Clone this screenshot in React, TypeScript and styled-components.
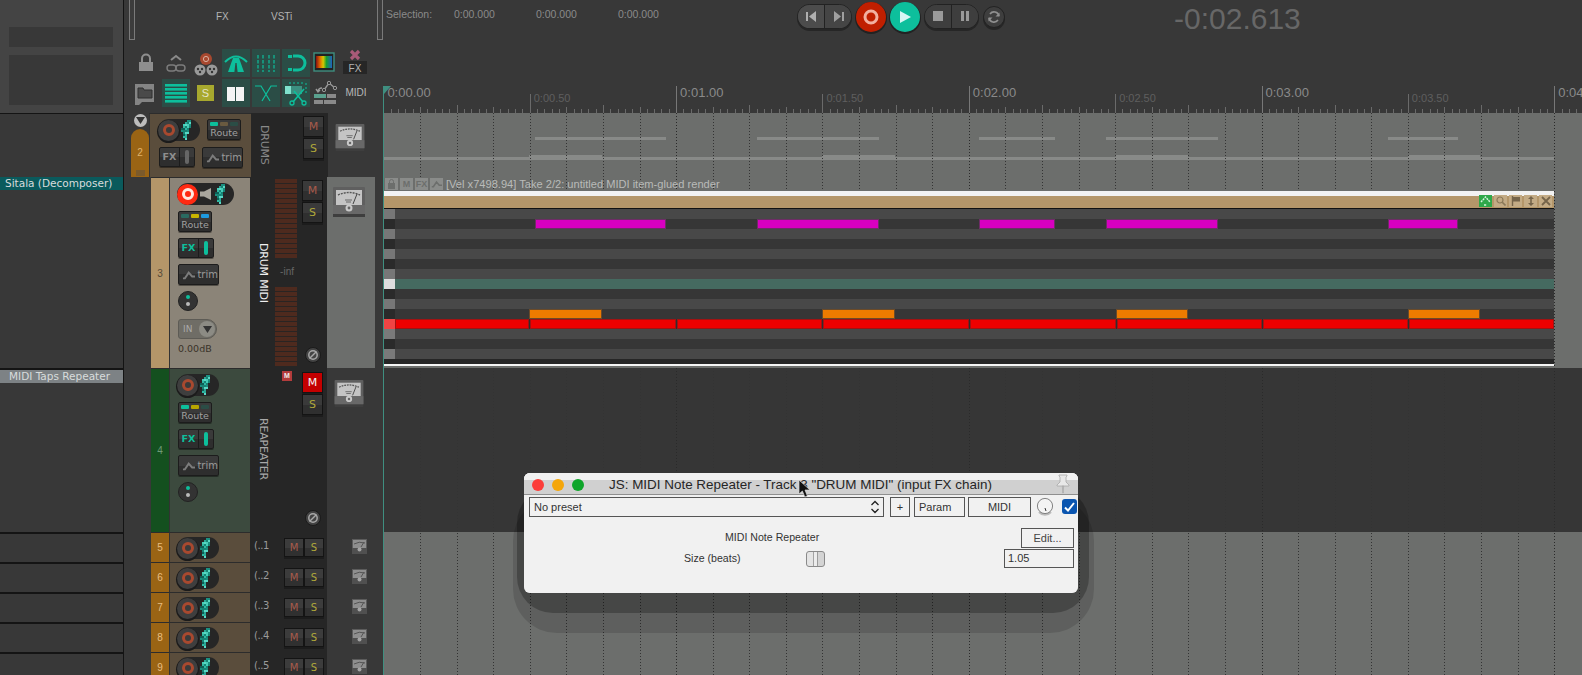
import React from "react";
import styled, { createGlobalStyle } from "styled-components";

const Global = createGlobalStyle`
  html, body { margin: 0; padding: 0; background: #383838; overflow: hidden; }
  * { box-sizing: border-box; }
`;

const UI = `"DejaVu Sans", "Liberation Sans", sans-serif`;
const SANS = `"Liberation Sans", Arial, sans-serif`;
const TEAL = "#0dbf9c";

const Page = styled.div`
  width: 1582px; height: 675px; display: flex; overflow: hidden; position: relative;
  background: #383838; font-family: ${SANS};
`;

/* ---------- names column ---------- */
const Names = styled.div`
  width: 124px; height: 675px; flex: none; display: flex; flex-direction: column; overflow: hidden;
  border-right: 1px solid #141414; background: #383838;
`;
const NamesTop = styled.div`
  height: 113px; flex: none; background: #444; padding: 27px 10px 0 9px; display: flex; flex-direction: column; gap: 8px;
`;
const NamesBox = styled.div<{ $h: number }>`height: ${p => p.$h}px; background: #383838;`;
const NameSpacer = styled.div<{ $h: number }>`
  height: ${p => p.$h}px; flex: none; border-top: 1px solid #141414;
`;
const NameLabel = styled.div<{ $bg: string; $pad: number }>`
  height: 13px; flex: none; background: ${p => p.$bg}; color: #d8dcdc; font: 10.5px/13px ${UI};
  padding-left: ${p => p.$pad}px; white-space: nowrap;
`;
const NameGap = styled.div<{ $h: number }>`height: ${p => p.$h}px; flex: none;`;
const NameSlim = styled.div<{ $h: number }>`
  height: ${p => p.$h}px; flex: none; border-top: 2px solid #141414;
`;

/* ---------- TCP column ---------- */
const Tcp = styled.div`width: 259px; height: 675px; flex: none; display: flex; flex-direction: column;`;
const TcpHead = styled.div`height: 113px; flex: none; display: flex; flex-direction: column;`;
const TopStrip = styled.div`height: 40px; display: flex; align-items: flex-start; padding-left: 5px; color: #b4b4b4; font: 10px ${SANS};`;
const VBar = styled.div`width: 6px; height: 40px; background: #3c3c3c; border: 1px solid #7a7a7a; border-top: 0; flex: none;`;
const StripText = styled.span<{ $w: number; $ml: number }>`
  display: block; width: ${p => p.$w}px; margin-left: ${p => p.$ml}px; margin-top: 11px; line-height: 12px;
`;
const RightBar = styled(VBar)`margin-left: 76px;`;
const ToolGrid = styled.div`
  margin-top: 9px; margin-left: 8px; display: grid; grid-template-columns: repeat(8, 30px); grid-auto-rows: 30px;
`;
const ToolCell = styled.div<{ $on?: boolean }>`
  width: 28px; height: 28px; background: ${p => (p.$on ? "#2b4d46" : "transparent")};
  color: #b8b8b8; font: 10px/28px ${SANS}; text-align: center;
`;

const TrackRow = styled.div<{ $h: number }>`height: ${p => p.$h}px; flex: none; display: flex;`;
const Gutter = styled.div<{ $w: number }>`width: ${p => p.$w}px; flex: none; position: relative;`;
const FolderKnob = styled.div`
  position: absolute; left: 10px; top: 1px; width: 13px; height: 13px; border-radius: 50%;
  background: #bdbdbd; display: flex; align-items: center; justify-content: center;
`;
const FolderTab = styled.div`
  width: 18px; flex: none; margin-top: 16px; border-radius: 9px 9px 0 0; background: #9a6414; color: #e0b269;
  font: 10px ${SANS}; display: flex; flex-direction: column; align-items: center; padding-top: 18px; position: relative;
`;
const FolderGlyph = styled.div`
  position: absolute; bottom: 1px; left: 5px; width: 9px; height: 6px; background: #7b5a2b;
`;
const Strip = styled.div<{ $bg: string; $fg: string }>`
  width: 18px; flex: none; background: ${p => p.$bg}; color: ${p => p.$fg}; font: 10px ${SANS};
  display: flex; align-items: center; justify-content: center; border-top: 1px solid #2c2c2c;
`;
const Panel = styled.div<{ $bg: string }>`
  width: 81px; flex: none; background: ${p => p.$bg}; border-left: 1px solid #333; border-top: 1px solid #2c2c2c;
  padding: 5px 0 0 7px; display: flex; flex-direction: column; gap: 6px; align-items: flex-start;
`;
const WidePanel = styled(Panel)`
  width: 102px; padding: 5px 0 0 8px; flex-direction: row; flex-wrap: wrap; gap: 6px; align-content: flex-start;
`;
const NameBox = styled.div`
  width: 77px; flex: none; background: #262626; display: flex; position: relative;
`;
const NameSlot = styled.div<{ $top: number; $fg: string }>`
  width: 25px; flex: none; padding-top: ${p => p.$top}px; display: flex; justify-content: center;
  color: ${p => p.$fg}; font: 11px/12px ${UI}; letter-spacing: -.2px;
`;
const Vertical = styled.span`writing-mode: vertical-rl; white-space: nowrap; line-height: 12px;`;
const MeterCol = styled.div`width: 22px; flex: none; display: flex; flex-direction: column;`;
const MeterBar = styled.div`
  height: 79px; margin-top: 2px; background: repeating-linear-gradient(to bottom, #4e2a1e 0 4px, #2a2422 4px 5px);
`;
const MeterLabel = styled.div`height: 27px; color: #666; font: 10px/27px ${SANS}; text-align: right; padding-right: 3px;`;
const StripCol = styled.div<{ $pt: number; $pb: number }>`
  width: 21px; margin-left: 5px; flex: none; display: flex; flex-direction: column; gap: 1px; align-items: center;
  padding: ${p => p.$pt}px 0 ${p => p.$pb}px;
`;
const MSButton = styled.div<{ $h: number; $fg: string; $bg?: string }>`
  width: 21px; height: ${p => p.$h}px; background: ${p => p.$bg || "linear-gradient(#3a3a3a 55%, #2f2f2f 55%)"};
  border: 1px solid #141414; color: ${p => p.$fg}; font: 11px/${p => p.$h - 2}px ${UI}; text-align: center;
  box-shadow: 0 2px 0 #1c1c1c;
`;
const PhaseBtn = styled.div`
  margin-top: auto; width: 16px; height: 16px; border-radius: 50%; background: #444; border: 1px solid #1a1a1a;
  display: flex; align-items: center; justify-content: center;
`;
const MutedBadge = styled.div`
  position: absolute; left: 32px; top: 3px; width: 10px; height: 10px; background: #b33c3c; color: #eee;
  font: bold 7px/10px ${SANS}; text-align: center;
`;
const MeterBox = styled.div<{ $bg: string; $pt: number; $pl: number }>`
  width: 48px; flex: none; background: ${p => p.$bg}; padding: ${p => p.$pt}px 0 0 ${p => p.$pl}px;
`;
const CompactName = styled.div`
  width: 34px; flex: none; color: #9a9a9a; font: 10px ${UI}; padding: 8px 0 0 4px; letter-spacing: -.4px; white-space: nowrap;
`;
const CompactMS = styled.div`
  display: flex; margin-top: 6px; height: 19px; box-shadow: 0 2px 0 #1c1c1c; flex: none;
`;
const CompactBtn = styled.div<{ $fg: string }>`
  width: 20px; height: 19px; border: 1px solid #141414; background: linear-gradient(#3c3c3c 55%, #303030 55%);
  color: ${p => p.$fg}; font: 10px/17px ${UI}; text-align: center;
`;

const RecPill = styled.div<{ $w: number }>`
  width: ${p => p.$w}px; height: 22px; border-radius: 11px; background: #262626; display: flex; align-items: center; flex: none; gap: 2px;
`;
const RecDisc = styled.div<{ $armed?: boolean }>`
  width: 21px; height: 21px; border-radius: 50%; flex: none; display: flex; align-items: center; justify-content: center;
  background: ${p => (p.$armed ? "#ff2a12" : "#3e3e3e")}; box-shadow: ${p => (p.$armed ? "none" : "0 1px 0 1px #1b1b1b")};
`;
const RecRing = styled.div<{ $armed?: boolean }>`
  width: 12px; height: 12px; border-radius: 50%; background: ${p => (p.$armed ? "#ff2a12" : "#3a3a3a")};
  border: 3px solid ${p => (p.$armed ? "#ffe9e0" : "#a8492f")};
`;
const BtnBase = styled.div`
  background: linear-gradient(#3a3a3a 50%, #2e2e2e 50%); border: 1px solid #1c1c1c; border-radius: 2px;
  box-shadow: 0 1px 0 rgba(0,0,0,.4); margin-left: 1px; color: #a0a0a0; font: 10px ${UI}; flex: none;
`;
const RouteBtn = styled(BtnBase)`width: 34px; height: 21px; display: flex; flex-direction: column; align-items: center; line-height: 11px; font-size: 9.5px;`;
const LedRow = styled.div`display: flex; gap: 2px; padding: 2px 0 1px;`;
const Led = styled.div<{ $c: string }>`width: 8px; height: 4px; border-radius: 1px; background: ${p => p.$c};`;
const FxBtn = styled(BtnBase)<{ $on?: boolean }>`
  width: 36px; height: 20px; display: flex; align-items: center; color: ${p => (p.$on ? TEAL : "#8e8e8e")}; font: bold 9.5px ${UI};
`;
const FxLabel = styled.span`width: 20px; height: 18px; line-height: 18px; text-align: center; border-right: 1px solid #1c1c1c;`;
const FxBar = styled.div<{ $on?: boolean }>`
  width: 4px; height: 14px; margin-left: 5px; border-radius: 2px; background: ${p => (p.$on ? TEAL : "#666")};
`;
const TrimBtn = styled(BtnBase)`width: 41px; height: 21px; display: flex; align-items: center; gap: 2px; padding-left: 3px; font: 10px ${UI}; color: #9a9a9a;`;
const Knob = styled.div`
  width: 20px; height: 20px; margin-left: 1px; border-radius: 50%; background: #333; border: 1px solid #222; position: relative; flex: none;
  display: flex; flex-direction: column; gap: 3px; align-items: center; padding-top: 3px;
`;
const KnobDot = styled.div<{ $c: string }>`width: 4px; height: 4px; border-radius: 50%; background: ${p => p.$c};`;
const InPill = styled.div`
  width: 39px; height: 20px; margin: 2px 0 0 1px; border-radius: 3px 10px 10px 3px; background: #6f6d66; border: 1px solid #5d5b55;
  color: #aaa; font: 9px/18px ${UI}; padding-left: 4px; position: relative;
`;
const InCircle = styled.div`
  position: absolute; right: 1px; top: 1px; width: 16px; height: 16px; border-radius: 50%; background: #8c8b84;
  display: flex; align-items: center; justify-content: center;
`;
const DbText = styled.div`margin: -2px 0 0 1px; color: #3a3329; font: 9.5px ${UI};`;
const CompactPanel = styled(Panel)`padding: 4px 0 0 7px;`;

/* ---------- arrange ---------- */
const Arrange = styled.div`flex: 1; min-width: 0; height: 675px; display: flex; flex-direction: column;`;
const Header = styled.div`height: 86px; flex: none; display: flex; align-items: flex-start; color: #888; font: 11px ${SANS};`;
const SelText = styled.span<{ $w: number; $ml: number }>`
  display: block; width: ${p => p.$w}px; margin-left: ${p => p.$ml}px; margin-top: 8px; line-height: 13px; white-space: nowrap; color: #8a8a8a; font-size: 10.5px;
`;
const Transport = styled.div`
  display: flex; align-items: center; margin-left: 139px; margin-top: 2px; gap: 1px; flex: none;
`;
const TGroup = styled.div<{ $ml?: number }>`
  width: 55px; height: 25px; border-radius: 12.5px; background: #3e3e3e; border: 1px solid #222; display: flex;
  box-shadow: 0 2px 0 #262626; overflow: hidden; margin: -1px 0 0 ${p => p.$ml || 0}px;
`;
const TCell = styled.div<{ $bg: string }>`
  flex: 1; display: flex; align-items: center; justify-content: center; background: ${p => p.$bg};
  & + & { border-left: 1px solid #222; }
`;
const TBig = styled.div<{ $bg: string; $ml: number }>`
  width: 30px; height: 30px; border-radius: 50%; background: ${p => p.$bg}; display: flex; align-items: center; justify-content: center;
  box-shadow: 0 1px 0 1px #222; margin-left: ${p => p.$ml}px; flex: none;
`;
const TLoop = styled.div`
  width: 22px; height: 22px; border-radius: 50%; background: #3e3e3e; border: 1px solid #222; display: flex; align-items: center; justify-content: center;
  margin-left: 3px; box-shadow: 0 2px 0 #262626; flex: none;
`;
const BigTime = styled.div`
  margin-left: 169px; margin-top: 1px; color: #676767; font: 30px/36px ${SANS}; white-space: nowrap;
`;
const RulerBox = styled.div`height: 27px; flex: none; position: relative;`;
const RulerSvg = styled.svg`display: block;`;
const LaneArea = styled.div`
  flex: 1; min-height: 0; position: relative; display: flex; flex-direction: column; border-left: 1px solid #3f8f80;
`;
const Lane = styled.div<{ $h: number; $bg: string }>`
  height: ${p => p.$h}px; flex: none; background: ${p => p.$bg}; position: relative;
`;
const Fill = styled.div<{ $bg: string }>`flex: 1; background: ${p => p.$bg};`;
const GridOverlay = styled.svg`position: absolute; left: 0; top: 0; z-index: 1; pointer-events: none;`;
const Thumb = styled.svg`display: block; position: absolute; left: 0; top: 0;`;

const Item = styled.div`position: relative; z-index: 2; width: 1170px; height: 176px; display: flex; flex-direction: column;`;
const ItemLabel = styled.div`
  position: relative; z-index: 2; height: 14px; display: flex; align-items: center; gap: 2px; padding-left: 1px; color: #b9bbb9; font: 11.1px/14px ${SANS};
`;
const MiniIcon = styled.div<{ $bg: string; $fg?: string }>`
  width: 13px; height: 12px; background: ${p => p.$bg}; color: ${p => p.$fg || "#6c6e6c"}; font: bold 9px/12px ${SANS}; text-align: center; flex: none;
  display: flex; align-items: center; justify-content: center;
`;
const LabelText = styled.span`margin-left: 1px; white-space: nowrap;`;
const WhiteBand = styled.div`height: 5px; background: #f2f2f2; flex: none;`;
const TanBand = styled.div`
  height: 13px; background: #b49669; border-bottom: 1px solid #111; flex: none; display: flex; justify-content: flex-end;
  gap: 2px; padding-right: 2px; align-items: flex-start; overflow: visible;
`;
const TanBtn = styled.div<{ $bg: string }>`
  width: 13px; height: 12px; margin-top: -1px; background: ${p => p.$bg}; display: flex; align-items: center; justify-content: center; flex: none;
`;
const PitchRow = styled.div<{ $bg: string }>`
  height: 10px; flex: none; background: ${p => p.$bg}; position: relative; display: flex;
`;
const PianoKey = styled.div<{ $bg: string }>`width: 11px; height: 100%; background: ${p => p.$bg}; flex: none;`;
const Note = styled.div<{ $bg: string; $bd: string }>`
  position: absolute; top: 0; height: 10px; background: ${p => p.$bg}; border: 1px solid ${p => p.$bd};
`;
const ItemFoot = styled.div`height: 5px; flex: none; background: #262626;`;
const ItemLine = styled.div`height: 2px; flex: none; background: #f4f4f4;`;

/* ---------- FX window ---------- */
const FxWindow = styled.div`
  position: absolute; left: 524px; top: 473px; width: 554px; height: 120px; z-index: 5; border-radius: 6px;
  background: #f1f1f1; color: #222; font: 11px ${SANS}; display: flex; flex-direction: column;
  &::before {
    content: ""; position: absolute; z-index: -2; left: -11px; right: -16px; top: 24px; bottom: -40px; border-radius: 44px;
    background: rgba(0,0,0,.13);
  }
  &::after {
    content: ""; position: absolute; z-index: -1; left: -7px; right: -11px; top: 14px; bottom: -20px; border-radius: 36px;
    background: rgba(0,0,0,.25);
  }
`;
const WinSurface = styled.div`
  flex: 1; border-radius: 6px; background: #f1f1f1; display: flex; flex-direction: column; overflow: hidden;
`;
const TitleBar = styled.div`
  height: 22px; flex: none; background: linear-gradient(#f1f1f1 0 7px, #d0d0d0 7px 21px, #8f8f8f 21px);
  display: flex; align-items: center; position: relative; padding-left: 8px; gap: 8px; padding-top: 1px;
`;
const Light = styled.div<{ $c: string }>`width: 12px; height: 12px; border-radius: 50%; background: ${p => p.$c};`;
const TitleText = styled.div`
  position: absolute; left: 85px; top: 4px; font: 13.45px/16px ${SANS}; color: #262626; white-space: nowrap;
`;
const PinIcon = styled.svg`position: absolute; right: 7px; top: 1px;`;
const CursorIcon = styled.svg`position: absolute; left: 274px; top: 7px; z-index: 3;`;
const ControlRow = styled.div`
  display: flex; align-items: center; gap: 5px; padding: 1px 0 0 5px; height: 22px; flex: none;
`;
const FrameBox = styled.div<{ $w: number; $center?: boolean; $ml?: number }>`
  width: ${p => p.$w}px; height: 20px; border: 1px solid #555; flex: none; font: 11px/18px ${SANS};
  text-align: ${p => (p.$center ? "center" : "left")}; padding-left: ${p => (p.$center ? 0 : 4)}px; color: #333;
  display: flex; align-items: center; justify-content: ${p => (p.$center ? "center" : "space-between")};
  margin-left: ${p => p.$ml || 0}px;
`;
const PresetArrows = styled.svg`margin-right: 2px; flex: none;`;
const WinKnob = styled.svg`flex: none;`;
const CheckBox = styled.div`
  width: 15px; height: 15px; border-radius: 3px; background: #0a55b0; flex: none; display: flex; align-items: center; justify-content: center; margin-left: 3px;
`;
const WinBody = styled.div`
  display: grid; grid-template-columns: 160px 122px 198px 70px; grid-template-rows: 20px 22px; row-gap: 2px; padding-top: 11px;
`;
const Heading = styled.div`grid-column: 2 / 4; grid-row: 1; padding: 2px 0 0 41px; font: 10.6px/14px ${SANS}; color: #333; white-space: nowrap;`;
const EditBtn = styled.div`
  grid-column: 4; grid-row: 1; margin-left: 17px; width: 53px; height: 20px; border: 1px solid #555; text-align: center; font: 11px/18px ${SANS}; color: #444;
`;
const ParamName = styled.div`grid-column: 1; grid-row: 2; margin-left: 160px; white-space: nowrap; font: 10.6px/16px ${SANS}; color: #333;`;
const SliderCell = styled.div`grid-column: 3; grid-row: 2; position: relative;`;
const Thumbish = styled.div`
  width: 19px; height: 16px; border-radius: 3px; border: 1px solid #8a8a8a; margin-top: 1px;
  background: linear-gradient(90deg, #e4e4e4 0 35%, #a4a4a4 35% 42%, #ececec 42% 60%, #9c9c9c 60% 66%, #d4d4d4 66% 100%);
`;
const ValueBox = styled.div`
  grid-column: 4; grid-row: 2; margin-top: -1px; width: 70px; height: 19px; border: 1px solid #555; font: 11px/17px ${SANS}; padding-left: 3px; color: #333;
`;

/* ---------- small drawings ---------- */
const FEATHER = ["...##.", "..###.", ".####.", ".####.", "####..", "####..", ".###..", ".##...", ".##...", "..#..."];
const FEATHER_TONES = ["#178274", "#5ad8c6", "#2fb8a4", "#0e5f56", "#45cdb8", "#2aa897", "#1b8f80"];
const Feather = () => (
  <svg width="12" height="20" viewBox="0 0 6 10" shapeRendering="crispEdges">
    {FEATHER.flatMap((row, y) =>
      row.split("").map((c, x) => {
        if (c !== "#") return null;
        const fill = FEATHER_TONES[(x * x * 3 + y * y * 5 + x * y) % FEATHER_TONES.length];
        return <rect key={`${x}-${y}`} x={x} y={y} width="1" height="1" fill={fill} />;
      })
    )}
  </svg>
);

const Speaker = () => (
  <svg width="13" height="14" viewBox="0 0 13 14">
    <path d="M0 4.5h4L11 1v12L4 9.5H0z" fill="#a9a69e" />
  </svg>
);

const Vu: React.FC<{ w: number; h: number }> = ({ w, h }) => (
  <svg width={w} height={h} viewBox="0 0 32 30">
    <rect x="0" y="0" width="32" height="27" rx="1" fill="#5f5f5f" />
    <rect x="0" y="27" width="32" height="3" fill="#3e3e3e" />
    <rect x="3" y="3" width="26" height="15" fill="#c4c4c4" />
    <path d="M5 8 Q16 3 27 8" fill="none" stroke="#555" strokeWidth="1.4" strokeDasharray="2 1" />
    <path d="M12 13h7M13 15h5" stroke="#666" strokeWidth="1" />
    <path d="M20 17L24 7" stroke="#444" strokeWidth="1" />
    <rect x="0" y="18" width="32" height="9" fill="#686868" />
    <circle cx="16" cy="21" r="3.5" fill="#c9c9c9" />
    <circle cx="16" cy="21" r="1.4" fill="#666" />
  </svg>
);

const VuSmall = () => (
  <svg width="15" height="15" viewBox="0 0 15 15">
    <rect width="15" height="15" fill="#5c5c5c" />
    <rect x="1" y="1" width="13" height="8" fill="#8e8e8e" />
    <path d="M2 5Q7 2 13 4M9 8l3-5" fill="none" stroke="#555" strokeWidth="1" />
    <rect x="0" y="9" width="15" height="6" fill="#505050" />
    <circle cx="7.5" cy="10.5" r="2" fill="#a4a4a4" />
  </svg>
);

const Phase = () => (
  <svg width="12" height="12" viewBox="0 0 12 12">
    <circle cx="6" cy="6" r="4.2" fill="none" stroke="#a8a8a8" strokeWidth="1.5" />
    <path d="M2.5 9.5l7-7" stroke="#a8a8a8" strokeWidth="1.5" />
  </svg>
);

const TrimGlyph = () => (
  <svg width="14" height="10" viewBox="0 0 14 10">
    <path d="M1 8.5h2L7 2.5l3.5 4H14" fill="none" stroke="#7c7c7c" strokeWidth="2" />
  </svg>
);

const ToolIcon: React.FC<{ name: string }> = ({ name }) => {
  const P = (c: React.ReactNode) => <svg width="28" height="28" viewBox="0 0 28 28">{c}</svg>;
  switch (name) {
    case "lock":
      return P(<><rect x="7" y="13" width="14" height="9" fill="#8e8e8e" /><path d="M10 13V9.5a4 4 0 018 0V13" fill="none" stroke="#8e8e8e" strokeWidth="2" /></>);
    case "link":
      return P(<><path d="M9 11l5-4 5 4" fill="none" stroke="#8a8a8a" strokeWidth="2" /><rect x="5" y="16" width="9" height="6" rx="3" fill="none" stroke="#7c7c7c" strokeWidth="1.4" /><rect x="14" y="16" width="9" height="6" rx="3" fill="none" stroke="#7c7c7c" strokeWidth="1.4" /></>);
    case "reels":
      return P(<><circle cx="14" cy="10" r="6" fill="#a8482f" /><circle cx="14" cy="10" r="2.6" fill="none" stroke="#d8b0a0" strokeWidth="1" /><circle cx="8" cy="21" r="5.5" fill="#999" /><circle cx="20" cy="21" r="5.5" fill="#999" />{[[6, 20], [10, 20], [8, 23], [18, 20], [22, 20], [20, 23]].map(([x, y]) => <circle key={`${x}${y}`} cx={x} cy={y} r="1.2" fill="#333" />)}</>);
    case "road":
      return P(<><path d="M3 13Q14 2 25 13" fill="none" stroke={TEAL} strokeWidth="2" /><path d="M11 9h6l5 14H6z" fill={TEAL} /><path d="M13.4 14h1.2l1 9h-3.2z" fill="#2b4d46" /></>);
    case "grid":
      return P(<>{[6, 11, 17, 22].map(x => <path key={x} d={`M${x} 6v17`} stroke={TEAL} strokeWidth="1.2" strokeDasharray="3.5 1.5" />)}</>);
    case "magnet":
      return P(<><path d="M11 7h5a7 7 0 010 14h-5" fill="none" stroke={TEAL} strokeWidth="3" /><rect x="6" y="6" width="4" height="3" fill={TEAL} /><rect x="6" y="19" width="4" height="3" fill={TEAL} /></>);
    case "spectrum":
      return (
        <svg width="28" height="28" viewBox="0 0 28 28">
          <defs><linearGradient id="spec"><stop offset="0" stopColor="#8a1010" /><stop offset=".25" stopColor="#e06a00" /><stop offset=".45" stopColor="#d8c800" /><stop offset=".65" stopColor="#18a030" /><stop offset="1" stopColor="#2060c0" /></linearGradient></defs>
          <rect x="2" y="4" width="20" height="18" fill="#222" stroke="#3f8f80" strokeWidth="1.4" />
          <rect x="4" y="7" width="16" height="12" fill="url(#spec)" />
        </svg>
      );
    case "fxoff":
      return P(<><path d="M9 2l8 8M17 2l-8 8" stroke="#a85a78" strokeWidth="3.2" /><rect x="1" y="12" width="24" height="13" fill="#262626" /><text x="13" y="22.5" textAnchor="middle" fontSize="10" fontFamily="Liberation Sans" fill="#b4b4b4">FX</text></>);
    case "folder":
      return P(<><path d="M3 5h19v18h-12l-3 3H3z" fill="#848484" /><path d="M6 9h5l1 2h8v8H6z" fill="#4a4a4a" stroke="#2f2f2f" /></>);
    case "lanes":
      return P(<>{[5, 9, 13, 17, 21].map(y => <rect key={y} x="3" y={y} width="22" height="2.6" fill={TEAL} />)}</>);
    case "solo":
      return P(<><rect x="5" y="6" width="17" height="16" fill="#a8a82e" /><text x="13.5" y="18" textAnchor="middle" fontSize="11" fontFamily="Liberation Sans" fill="#e4e4c8">S</text></>);
    case "columns":
      return P(<><rect x="5" y="8" width="8" height="14" fill="#f4f4f4" /><rect x="14" y="8" width="8" height="14" fill="#f4f4f4" /></>);
    case "cross":
      return P(<><path d="M3 7h6l9 15M25 7h-6l-9 15" fill="none" stroke={TEAL} strokeWidth="1.2" /></>);
    case "scissors":
      return P(<><rect x="3" y="7" width="6" height="8" fill="#7fe0cc" /><rect x="9" y="7" width="11" height="8" fill="#3b8f80" /><path d="M7 4h16M24 4v10" stroke={TEAL} strokeWidth="1" strokeDasharray="2 2" /><path d="M22 10L11 23M12 12l9 11" stroke={TEAL} strokeWidth="1.6" /><circle cx="10" cy="24" r="2" fill="none" stroke={TEAL} strokeWidth="1.3" /><circle cx="22" cy="24" r="2" fill="none" stroke={TEAL} strokeWidth="1.3" /></>);
    case "envelope":
      return P(<><path d="M6 12a4 4 0 014-3M4 10l2 3 2-2" fill="none" stroke="#999" strokeWidth="1.4" /><path d="M12 11l5-7 6 5" fill="none" stroke="#999" strokeWidth="1.3" /><circle cx="12" cy="11" r="1.7" fill="#383838" stroke="#999" /><circle cx="17" cy="4" r="1.7" fill="#383838" stroke="#999" /><circle cx="23" cy="9" r="1.7" fill="#383838" stroke="#999" /><rect x="2" y="15" width="12" height="4" fill="#5aa08e" /><rect x="15" y="15" width="9" height="4" fill="#8a8a8a" /><rect x="2" y="21" width="9" height="4" fill="#8a8a8a" /><rect x="12" y="21" width="12" height="4" fill="#8a8a8a" /></>);
    default:
      return null;
  }
};

const toolbar: { icon?: string; on?: boolean; text?: string }[] = [
  { icon: "lock" }, { icon: "link" }, { icon: "reels" }, { icon: "road", on: true }, { icon: "grid", on: true }, { icon: "magnet", on: true }, { icon: "spectrum" }, { icon: "fxoff" },
  { icon: "folder" }, { icon: "lanes", on: true }, { icon: "solo" }, { icon: "columns", on: true }, { icon: "cross", on: true }, { icon: "scissors", on: true }, { icon: "envelope" }, { text: "MIDI" },
];

const Rec: React.FC<{ w: number; armed?: boolean; speaker?: boolean }> = ({ w, armed, speaker }) => (
  <RecPill $w={w}>
    <RecDisc $armed={armed}><RecRing $armed={armed} /></RecDisc>
    {speaker && <Speaker />}
    <Feather />
  </RecPill>
);
const Route: React.FC<{ leds: string[] }> = ({ leds }) => (
  <RouteBtn><LedRow>{leds.map((c, i) => <Led key={i} $c={c} />)}</LedRow>Route</RouteBtn>
);
const Fx: React.FC<{ on?: boolean }> = ({ on }) => (
  <FxBtn $on={on}><FxLabel>FX</FxLabel><FxBar $on={on} /></FxBtn>
);
const Trim = () => <TrimBtn><TrimGlyph />trim</TrimBtn>;
const Pan = () => <Knob><KnobDot $c={TEAL} /><KnobDot $c="#bbb" /></Knob>;
const Triangle = () => (
  <svg width="9" height="7" viewBox="0 0 9 7"><path d="M0 0h9L4.5 7z" fill="#333" /></svg>
);

const compact = [
  { n: 5, t: "(..1" }, { n: 6, t: "(..2" }, { n: 7, t: "(..3" }, { n: 8, t: "(..4" }, { n: 9, t: "(..5" },
];

/* ---------- arrange data ---------- */
const ORIGIN = 384;
const PX_SEC = 292.7;
const xOf = (s: number) => 383.4 + s * PX_SEC - ORIGIN;
const ticks = Array.from({ length: 170 }, (_, i) => i);
const magenta: [number, number][] = [[535, 666], [757, 879], [979, 1055], [1106, 1218], [1388, 1458]];
const orange: [number, number][] = [[529, 602], [822, 895], [1116, 1188], [1408, 1480]];
const red: [number, number][] = [[395, 529], [530, 676], [677, 822], [823, 969], [970, 1116], [1117, 1262], [1263, 1408], [1409, 1554]];
const L = "#484848", D = "#363636";
const pitches: { bg: string; key: string; notes?: [number, number][]; c?: string; b?: string }[] = [
  { bg: L, key: "#777" },
  { bg: D, key: "#2a2a2a", notes: magenta, c: "#d800c0", b: "#6e2c66" },
  { bg: L, key: "#777" }, { bg: D, key: "#2a2a2a" }, { bg: L, key: "#777" }, { bg: D, key: "#2a2a2a" }, { bg: L, key: "#777" },
  { bg: "#456a60", key: "#dedede" },
  { bg: D, key: "#2a2a2a" }, { bg: L, key: "#777" },
  { bg: D, key: "#2a2a2a", notes: orange, c: "#ee7b00", b: "#6b4a28" },
  { bg: "#2e2e2e", key: "#f04444", notes: red, c: "#ee0000", b: "#a01212" },
  { bg: L, key: "#7a7a7a" }, { bg: D, key: "#2a2a2a" }, { bg: L, key: "#7a7a7a" },
];

const Ruler = () => (
  <RulerSvg width="1199" height="27" viewBox="0 0 1199 27">
    {ticks.map(i => {
      const x = 0.4 + i * (PX_SEC / 40);
      const major = i % 40 === 0, half = i % 20 === 0, beat = i % 5 === 0;
      const top = major ? 0 : half ? 8 : i % 10 === 0 ? 19 : beat ? 21 : 23;
      return <path key={i} d={`M${Math.round(x) + 0.5} ${top}V27`} stroke={i === 0 ? "#3f8f80" : major ? "#777" : "#6a6a6a"} strokeWidth="1" />;
    })}
    {[0, 1, 2, 3, 4].map(s => (
      <text key={s} x={0.4 + s * PX_SEC + 4} y="11" fontFamily="Liberation Sans" fontSize="13" fill="#8a8a8a">{s === 4 ? "0:04" : `0:0${s}.00`}</text>
    ))}
    {[0, 1, 2, 3].map(s => (
      <text key={s} x={0.4 + (s + 0.5) * PX_SEC + 4} y="16" fontFamily="Liberation Sans" fontSize="11" fill="#5f5f5f">{`0:0${s}.50`}</text>
    ))}
    <path d="M0 0h8L1 8z" fill="#3f8f80" />
  </RulerSvg>
);

const Grid = () => (
  <GridOverlay width="1198" height="562">
    {Array.from({ length: 33 }, (_, i) => (
      <path key={i} d={`M${Math.round(xOf(i * 0.125)) + 0.5} 0V562`} stroke={i % 8 === 0 ? "#2a2a2a" : "#333"} strokeWidth="1" strokeDasharray="1 2" />
    ))}
  </GridOverlay>
);

export default function App() {
  return (
    <>
      <Global />
      <Page>
        <Names>
          <NamesTop>
            <NamesBox $h={20} />
            <NamesBox $h={50} />
          </NamesTop>
          <NameSpacer $h={64} />
          <NameLabel $bg="#0a5a5c" $pad={5}>Sitala (Decomposer)</NameLabel>
          <NameGap $h={178} />
          <NameSlim $h={15}><NameLabel $bg="#7d8285" $pad={9}>MIDI Taps Repeater</NameLabel></NameSlim>
          <NameGap $h={149} />
          {[0, 1, 2, 3, 4].map(i => <NameSlim key={i} $h={30} />)}
        </Names>

        <Tcp>
          <TcpHead>
            <TopStrip>
              <VBar />
              <StripText $w={20} $ml={81}>FX</StripText>
              <StripText $w={30} $ml={35}>VSTi</StripText>
              <RightBar />
            </TopStrip>
            <ToolGrid>
              {toolbar.map((t, i) => (
                <ToolCell key={i} $on={t.on}>{t.icon ? <ToolIcon name={t.icon} /> : t.text}</ToolCell>
              ))}
            </ToolGrid>
          </TcpHead>

          <TrackRow $h={64}>
            <Gutter $w={7}><FolderKnob><Triangle /></FolderKnob></Gutter>
            <FolderTab>2<FolderGlyph /></FolderTab>
            <WidePanel $bg="#5a4d3c">
              <Rec w={42} />
              <Route leds={["#0dbf9c", "#6a5a40", "#2b4d46"]} />
              <Fx />
              <Trim />
            </WidePanel>
            <NameBox>
              <NameSlot $top={12} $fg="#8a8a8a"><Vertical>DRUMS</Vertical></NameSlot>
              <MeterCol />
              <StripCol $pt={3} $pb={0}>
                <MSButton $h={21} $fg="#a85a4a">M</MSButton>
                <MSButton $h={21} $fg="#b0a83a">S</MSButton>
              </StripCol>
            </NameBox>
            <MeterBox $bg="#383838" $pt={11} $pl={7}><Vu w={30} h={27} /></MeterBox>
          </TrackRow>

          <TrackRow $h={191}>
            <Gutter $w={27} />
            <Strip $bg="#b49669" $fg="#554a38">3</Strip>
            <Panel $bg="#8b8478">
              <Rec w={57} armed speaker />
              <Route leds={["#2a6a60", "#c8b400", "#1e9ae0"]} />
              <Fx on />
              <Trim />
              <Pan />
              <InPill>IN<InCircle><Triangle /></InCircle></InPill>
              <DbText>0.00dB</DbText>
            </Panel>
            <NameBox>
              <NameSlot $top={66} $fg="#f0f0f0"><Vertical>DRUM MIDI</Vertical></NameSlot>
              <MeterCol>
                <MeterBar />
                <MeterLabel>-inf</MeterLabel>
                <MeterBar />
              </MeterCol>
              <StripCol $pt={3} $pb={5}>
                <MSButton $h={21} $fg="#a85a4a">M</MSButton>
                <MSButton $h={21} $fg="#b0a83a">S</MSButton>
                <PhaseBtn><Phase /></PhaseBtn>
              </StripCol>
            </NameBox>
            <MeterBox $bg="#6c6e6c" $pt={10} $pl={6}><Vu w={32} h={30} /></MeterBox>
          </TrackRow>

          <TrackRow $h={164}>
            <Gutter $w={27} />
            <Strip $bg="#14501f" $fg="#6f9a78">4</Strip>
            <Panel $bg="#3c4a3e">
              <Rec w={42} />
              <Route leds={["#0dbf9c", "#b8a600", "#2b4d46"]} />
              <Fx on />
              <Trim />
              <Pan />
            </Panel>
            <NameBox>
              <NameSlot $top={50} $fg="#a8a8a8"><Vertical>REAPEATER</Vertical></NameSlot>
              <MeterCol />
              <MutedBadge>M</MutedBadge>
              <StripCol $pt={4} $pb={6}>
                <MSButton $h={21} $fg="#f4f4f4" $bg="#c40000">M</MSButton>
                <MSButton $h={21} $fg="#b0a83a">S</MSButton>
                <PhaseBtn><Phase /></PhaseBtn>
              </StripCol>
            </NameBox>
            <MeterBox $bg="#383838" $pt={12} $pl={7}><Vu w={30} h={27} /></MeterBox>
          </TrackRow>

          {compact.map(c => (
            <TrackRow $h={30} key={c.n}>
              <Gutter $w={27} />
              <Strip $bg="#9a6414" $fg="#e8bd80">{c.n}</Strip>
              <CompactPanel $bg="#5a4d3c"><Rec w={42} /></CompactPanel>
              <NameBox>
                <CompactName>{c.t}</CompactName>
                <CompactMS>
                  <CompactBtn $fg="#a85a4a">M</CompactBtn>
                  <CompactBtn $fg="#b0a83a">S</CompactBtn>
                </CompactMS>
              </NameBox>
              <MeterBox $bg="#383838" $pt={7} $pl={25}><VuSmall /></MeterBox>
            </TrackRow>
          ))}
        </Tcp>

        <Arrange>
          <Header>
            <SelText $w={48} $ml={3}>Selection:</SelText>
            <SelText $w={40} $ml={20}>0:00.000</SelText>
            <SelText $w={40} $ml={42}>0:00.000</SelText>
            <SelText $w={40} $ml={42}>0:00.000</SelText>
            <Transport>
              <TGroup>
                <TCell $bg="#4c4c4c"><svg width="11" height="11" viewBox="0 0 11 11"><path d="M0 1h2v9H0zM10 0v11L3 5.5z" fill="#b0b0b0" /></svg></TCell>
                <TCell $bg="#454545"><svg width="11" height="11" viewBox="0 0 11 11"><path d="M9 1h2v9H9zM1 0v11l7-5.5z" fill="#a0a0a0" /></svg></TCell>
              </TGroup>
              <TBig $bg="#c01f00" $ml={3}><svg width="16" height="16" viewBox="0 0 16 16"><circle cx="8" cy="8" r="6" fill="none" stroke="#f2b0a0" strokeWidth="3" /></svg></TBig>
              <TBig $bg={TEAL} $ml={3}><svg width="14" height="14" viewBox="0 0 14 14"><path d="M2 1l11 6-11 6z" fill="#d8f6f4" /></svg></TBig>
              <TGroup $ml={3}>
                <TCell $bg="#3e3e3e"><svg width="11" height="11" viewBox="0 0 11 11"><rect width="10" height="10" fill="#9a9a9a" /></svg></TCell>
                <TCell $bg="#3e3e3e"><svg width="11" height="11" viewBox="0 0 11 11"><path d="M1 0h3v10H1zM6 0h3v10H6z" fill="#9a9a9a" /></svg></TCell>
              </TGroup>
              <TLoop><svg width="14" height="14" viewBox="0 0 14 14"><path d="M3 4a5 5 0 019 2M11 10a5 5 0 01-9-2" fill="none" stroke="#909090" strokeWidth="1.6" /><path d="M12.5 2.5v4h-4zM1.5 11.5v-4h4z" fill="#909090" /></svg></TLoop>
            </Transport>
            <BigTime>-0:02.613</BigTime>
          </Header>
          <RulerBox><Ruler /></RulerBox>
          <LaneArea>
            <Grid />
            <Lane $h={64} $bg="#6c6e6c">
              <Thumb width="1198" height="64">
                {magenta.map(([a, b]) => <rect key={a} x={a - ORIGIN} y="24" width={b - a} height="3" fill="#888a88" />)}
                <rect x="0" y="44" width="1170" height="3" fill="#888a88" />
                {orange.map(([a, b]) => <rect key={a} x={a - ORIGIN} y="42" width={b - a} height="5" fill="#888a88" />)}
              </Thumb>
            </Lane>
            <Lane $h={191} $bg="#6c6e6c">
              <ItemLabel>
                <MiniIcon $bg="#8a8c8a"><svg width="9" height="10" viewBox="0 0 9 10"><rect x="1" y="4" width="7" height="6" fill="#6c6e6c" /><path d="M2.5 4V2.5a2 2 0 014 0V4" fill="none" stroke="#6c6e6c" /></svg></MiniIcon>
                <MiniIcon $bg="#8a8c8a">M</MiniIcon>
                <MiniIcon $bg="#8a8c8a">FX</MiniIcon>
                <MiniIcon $bg="#8a8c8a"><svg width="11" height="8" viewBox="0 0 14 10"><path d="M1 8.5h2L7 2.5l3.5 4H14" fill="none" stroke="#6c6e6c" strokeWidth="2" /></svg></MiniIcon>
                <LabelText>[Vel x7498.94] Take 2/2: untitled MIDI item-glued render</LabelText>
              </ItemLabel>
              <Item>
                <WhiteBand />
                <TanBand>
                  <TanBtn $bg="#2ea84a"><svg width="11" height="10" viewBox="0 0 11 10"><path d="M1 6l4.5-5L10 6M4 9h3" fill="none" stroke="#d8f4e0" strokeWidth="1.4" strokeDasharray="2 .8" /></svg></TanBtn>
                  <TanBtn $bg="#c3ab85"><svg width="10" height="10" viewBox="0 0 10 10"><circle cx="4" cy="4" r="3" fill="none" stroke="#8a7858" strokeWidth="1.2" /><path d="M6 6l3.5 3.5" stroke="#8a7858" strokeWidth="1.6" /></svg></TanBtn>
                  <TanBtn $bg="#c3ab85"><svg width="10" height="10" viewBox="0 0 10 10"><path d="M1.5 0v10" stroke="#75644a" strokeWidth="1.4" /><rect x="2" y="1" width="7" height="4.5" fill="#75644a" /></svg></TanBtn>
                  <TanBtn $bg="#c3ab85"><svg width="8" height="10" viewBox="0 0 8 10"><path d="M4 0L7 3H1zM4 10L1 7h6zM3.2 3h1.6v4H3.2z" fill="#75644a" /></svg></TanBtn>
                  <TanBtn $bg="#c3ab85"><svg width="10" height="10" viewBox="0 0 10 10"><path d="M1 1l8 8M9 1L1 9" stroke="#75644a" strokeWidth="1.8" /></svg></TanBtn>
                </TanBand>
                {pitches.map((p, i) => (
                  <PitchRow key={i} $bg={p.bg}>
                    <PianoKey $bg={p.key} />
                    {p.notes?.map(([a, b]) => (
                      <Note key={a} $bg={p.c!} $bd={p.b!} style={{ left: a - ORIGIN, width: b - a }} />
                    ))}
                  </PitchRow>
                ))}
                <ItemFoot />
                <ItemLine />
              </Item>
            </Lane>
            <Lane $h={164} $bg="#363636" />
            <Fill $bg="#6c6e6c" />
          </LaneArea>
        </Arrange>

        <FxWindow>
          <WinSurface>
            <TitleBar>
              <Light $c="#fc3d39" />
              <Light $c="#f5a60a" />
              <Light $c="#0fa52a" />
              <TitleText>JS: MIDI Note Repeater - Track 3 "DRUM MIDI" (input FX chain)</TitleText>
              <CursorIcon width="13" height="18" viewBox="0 0 13 18"><path d="M1 0v14l3.4-3 2.4 6 2.6-1-2.4-6H12z" fill="#111" stroke="#ddd" strokeWidth=".7" /></CursorIcon>
              <PinIcon width="16" height="20" viewBox="0 0 16 20"><path d="M4 1h8v1l-1 1v5l3 3v1H2v-1l3-3V3L4 2zM7.4 12h1.2l-.3 7h-.6z" fill="#e8e8e8" stroke="#a8a8a8" strokeWidth=".8" /></PinIcon>
            </TitleBar>
            <ControlRow>
              <FrameBox $w={355}>No preset
                <PresetArrows width="12" height="16" viewBox="0 0 12 16"><path d="M2.5 6L6 2.5 9.5 6M2.5 10L6 13.5 9.5 10" fill="none" stroke="#222" strokeWidth="1.3" /></PresetArrows>
              </FrameBox>
              <FrameBox $w={20} $center $ml={1}>+</FrameBox>
              <FrameBox $w={51} $ml={-1}>Param</FrameBox>
              <FrameBox $w={63} $center $ml={-2}>MIDI</FrameBox>
              <WinKnob width="18" height="19" viewBox="0 0 18 19"><path d="M3 15a8 8 0 0012 0" fill="none" stroke="#bbb" strokeWidth="2" /><circle cx="9" cy="9" r="7.6" fill="#f4f4f4" stroke="#666" strokeWidth=".8" /><path d="M10 14l-1-3" stroke="#333" /></WinKnob>
              <CheckBox><svg width="11" height="10" viewBox="0 0 11 10"><path d="M1 5.5l3 3L10 1" fill="none" stroke="#fff" strokeWidth="2" /></svg></CheckBox>
            </ControlRow>
            <WinBody>
              <Heading>MIDI Note Repeater</Heading>
              <EditBtn>Edit...</EditBtn>
              <ParamName>Size (beats)</ParamName>
              <SliderCell><Thumbish /></SliderCell>
              <ValueBox>1.05</ValueBox>
            </WinBody>
          </WinSurface>
        </FxWindow>
      </Page>
    </>
  );
}
